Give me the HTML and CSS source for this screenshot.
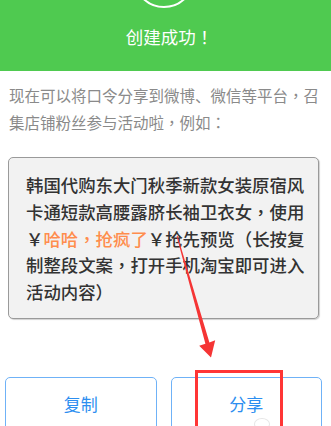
FILE: index.html
```html
<!DOCTYPE html>
<html lang="zh-CN">
<head>
<meta charset="utf-8">
<link rel="stylesheet" href="styles.css">
</head>
<body>
<div class="page">
  <header class="header">
    <div class="ring"></div>
    <h1 class="title">创建成功<span lang="zh-TW">！</span></h1>
  </header>
  <p class="intro">现在可以将口令分享到微博、微信等平台<span lang="zh-TW">，</span>召集店铺粉丝参与活动啦<span lang="zh-TW">，</span>例如<span lang="zh-TW">：</span></p>
  <div class="sample">韩国代购东大门秋季新款女装原宿风卡通短款高腰露脐长袖卫衣女<span lang="zh-TW">，</span>使用￥<span class="hl">哈哈<span lang="zh-TW">，</span>抢疯了</span>￥抢先预览<span lang="zh-TW">（</span>长按复制整段文案<span lang="zh-TW">，</span>打开手机淘宝即可进入活动内容<span lang="zh-TW">）</span></div>
  <div class="actions">
    <button class="btn">复制</button>
    <button class="btn">分享<span class="wm"></span></button>
  </div>
  <svg class="arrow" width="331" height="426" viewBox="0 0 331 426">
    <polygon fill="#f53535" points="176.6,236 177.6,236 209.4,342.5 215.2,340.3 211,357.5 199.2,345.8 205.4,343.8"/>
  </svg>
  <div class="mark"></div>
</div>
</body>
</html>
```
FILE: styles.css
```css
html, body {
  margin: 0;
  padding: 0;
  background: #fff;
}
.page {
  position: relative;
  width: 331px;
  height: 426px;
  overflow: hidden;
  font-family: "Noto Sans CJK TC", "Noto Sans CJK SC", "Noto Sans", sans-serif;
}
.header {
  height: 71px;
  background: #4fca50;
  overflow: hidden;
  display: flex;
  flex-direction: column;
  align-items: center;
}
.ring {
  width: 58px;
  height: 58px;
  border: 2px solid #fff;
  border-radius: 50%;
  margin-top: -54px;
  margin-right: 3px;
  flex: none;
}
.title {
  margin: 17px 0 0 8px;
  color: #fff;
  font-size: 17.5px;
  font-weight: 400;
  line-height: 24px;
}
.intro {
  margin: 11px 9px 0 9px;
  color: #8a8a8a;
  font-size: 15.5px;
  line-height: 26.5px;
}
.sample {
  margin: 22px 12px 0 8px;
  padding: 14px 10px 12px 17px;
  background: #f2f2f2;
  border: 1px solid #9a9a9a;
  border-radius: 5px;
  box-shadow: 1px 1px 1px rgba(0,0,0,0.18);
  color: #333;
  font-size: 17.4px;
  font-weight: 500;
  line-height: 26.8px;
}
.hl {
  color: #ff8d4d;
}
.actions {
  display: flex;
  gap: 14px;
  margin: 58px 9px 0 5px;
}
.btn {
  position: relative;
  flex: 1;
  height: 64px;
  background: #fff;
  border: 1.5px solid #6fb2f7;
  border-radius: 5px;
  color: #2c8ef0;
  font-family: "Noto Sans CJK TC", "Noto Sans CJK SC", "Noto Sans", sans-serif;
  font-size: 17px;
  padding: 14px 0 0;
  display: flex;
  justify-content: center;
  align-items: flex-start;
  line-height: 24px;
}
.wm {
  position: absolute;
  left: 82px;
  top: 40px;
  width: 14px;
  height: 10px;
  border: 1px solid #e6e6e6;
  border-radius: 50%;
}
.arrow {
  position: absolute;
  left: 0;
  top: 0;
}
.mark {
  position: absolute;
  left: 195px;
  top: 370px;
  width: 82px;
  height: 70px;
  border: 3px solid #ff3535;
}
```
